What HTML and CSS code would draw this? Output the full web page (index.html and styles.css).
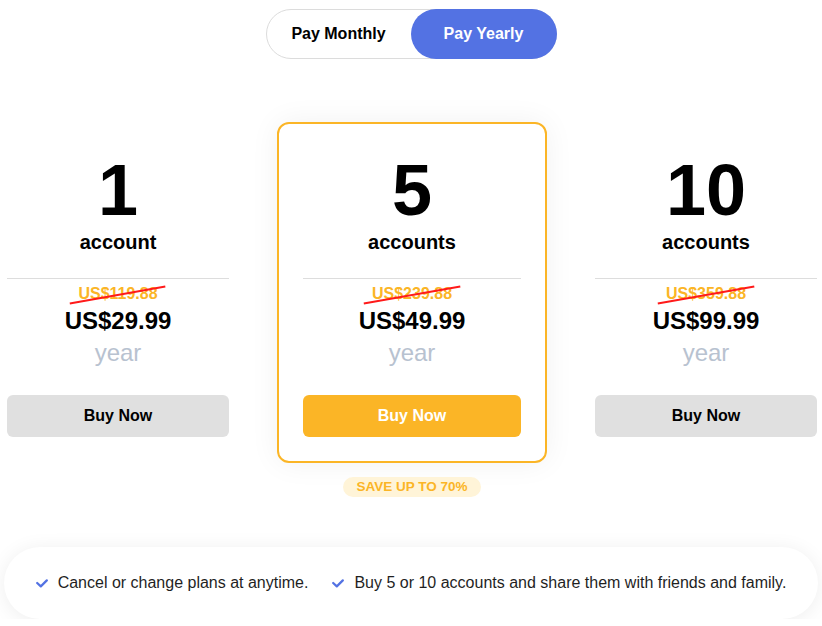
FILE: index.html
```html
<!doctype html>
<html lang="en">
  <head>
    <meta charset="utf-8" />
    <meta name="viewport" content="width=device-width, initial-scale=1.0" />
    <title>Pricing</title>
    <link rel="stylesheet" href="styles.css">
  </head>

  <body>
    <div class="billing_toggle">
      <div class="toggle_btn">Pay Monthly</div>
      <div class="toggle_btn active">Pay Yearly</div>
    </div>

    <div class="plans">
      <div class="plan">
        <div class="plan_count">1</div>
        <div class="plan_unit">account</div>
        <div class="plan_divider"></div>
        <div class="old_price"><span>US$119.88</span></div>
        <div class="price">US$29.99</div>
        <div class="period">year</div>
        <div class="buy_btn">Buy Now</div>
      </div>

      <div class="plan_col">
        <div class="plan featured">
          <div class="plan_count">5</div>
          <div class="plan_unit">accounts</div>
          <div class="plan_divider"></div>
          <div class="old_price"><span>US$239.88</span></div>
          <div class="price">US$49.99</div>
          <div class="period">year</div>
          <div class="buy_btn">Buy Now</div>
        </div>
        <div class="save_badge">SAVE UP TO 70%</div>
      </div>

      <div class="plan">
        <div class="plan_count">10</div>
        <div class="plan_unit">accounts</div>
        <div class="plan_divider"></div>
        <div class="old_price"><span>US$359.88</span></div>
        <div class="price">US$99.99</div>
        <div class="period">year</div>
        <div class="buy_btn">Buy Now</div>
      </div>
    </div>

    <div class="perks">
      <div class="perk">
        <svg class="check" width="12" height="9" viewBox="0 0 12 9">
          <polyline points="1.2,4 4.8,7.4 10.8,1.4" fill="none" stroke="#5372e3" stroke-width="2.2" stroke-linecap="round" stroke-linejoin="round" />
        </svg>
        Cancel or change plans at anytime.
      </div>
      <div class="perk">
        <svg class="check" width="12" height="9" viewBox="0 0 12 9">
          <polyline points="1.2,4 4.8,7.4 10.8,1.4" fill="none" stroke="#5372e3" stroke-width="2.2" stroke-linecap="round" stroke-linejoin="round" />
        </svg>
        Buy 5 or 10 accounts and share them with friends and family.
      </div>
    </div>
  </body>
</html>
```

FILE: styles.css
```css
body {
  margin: 0;
  font-family: "Liberation Sans", Arial, sans-serif;
  color: #000;
  background: #fff;
  overflow: hidden;
}

/* 월/연 결제 토글 */
.billing_toggle {
  display: flex;
  width: 289px;
  margin: 9px auto 0;
  border: 1px solid #dcdcdc;
  border-radius: 25px;
}

.toggle_btn {
  width: 144px;
  height: 48px;
  display: flex;
  justify-content: center;
  align-items: center;
  font-size: 16px;
  font-weight: bold;
  border-radius: 25px;
  cursor: pointer;
}

.toggle_btn.active {
  background-color: #5372e3;
  color: #fff;
  margin: -1px -1px -1px 0;
  height: 50px;
  width: 146px;
}

/* 요금제 카드 */
.plans {
  display: flex;
  justify-content: center;
  gap: 24px;
  margin-top: 63px;
  padding-left: 2px;
}

.plan_col {
  display: flex;
  flex-direction: column;
  align-items: center;
}

.plan {
  flex: none;
  width: 270px;
  box-sizing: border-box;
  padding: 32px 24px 26px;
  text-align: center;
}

.plan.featured {
  padding: 30px 24px 24px;
  border: 2px solid #fbb526;
  border-radius: 12px;
  box-shadow: 0 0 30px rgba(0, 0, 0, 0.06);
}

.plan_count {
  font-size: 72px;
  font-weight: bold;
  line-height: 1;
}

.plan_unit {
  font-size: 20px;
  font-weight: bold;
  line-height: 24px;
  margin-top: 4px;
}

.plan_divider {
  height: 1px;
  background-color: #dddddd;
  margin-top: 24px;
}

.old_price {
  margin-top: 6px;
  font-size: 16px;
  font-weight: bold;
  color: #fbb526;
}

.old_price span {
  position: relative;
  display: inline-block;
}

/* 취소선 (대각선) */
.old_price span::after {
  content: "";
  position: absolute;
  left: -9px;
  right: -9px;
  top: 9px;
  height: 1.5px;
  background-color: #ff1a1a;
  transform: rotate(-10deg);
}

.price {
  margin-top: 4px;
  font-size: 24px;
  font-weight: bold;
}

.period {
  margin-top: 4px;
  font-size: 24px;
  color: #b8c2d0;
}

.buy_btn {
  margin-top: 28px;
  height: 42px;
  display: flex;
  justify-content: center;
  align-items: center;
  background-color: #e0e0e0;
  border-radius: 6px;
  font-size: 16px;
  font-weight: bold;
  cursor: pointer;
}

.featured .buy_btn {
  background-color: #fbb526;
  color: #fff;
}

.save_badge {
  margin-top: 14px;
  height: 20px;
  line-height: 20px;
  padding: 0 13px;
  border-radius: 10px;
  background-color: #fff4d8;
  color: #fbb526;
  font-size: 13.5px;
  font-weight: bold;
}

/* 하단 안내 바 */
.perks {
  display: flex;
  justify-content: center;
  align-items: center;
  gap: 24px;
  height: 72px;
  margin: 50px 4px 0;
  border-radius: 36px;
  background-color: #fff;
  box-shadow: 0 2px 20px rgba(0, 0, 0, 0.07);
  font-size: 16px;
  color: #1f1f1f;
}

.perk {
  display: flex;
  align-items: center;
  gap: 10px;
}

.check {
  flex: none;
}
```
